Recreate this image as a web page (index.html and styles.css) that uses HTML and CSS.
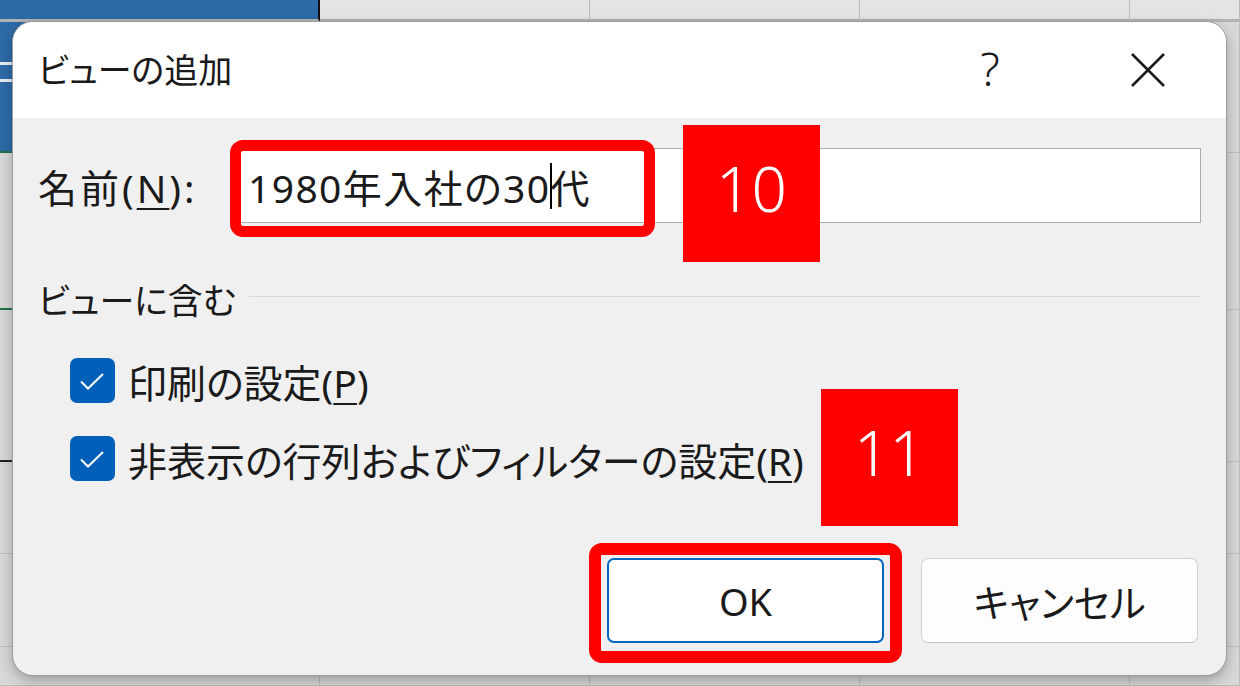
FILE: index.html
```html
<!DOCTYPE html>
<html lang="ja">
<head>
    <meta charset="UTF-8">
    <meta name="viewport" content="width=device-width, initial-scale=1.0">
    <title>ビューの追加</title>
    <link rel="stylesheet" href="styles.css">
</head>
<body>
    <!-- Excel sheet behind the dialog -->
    <div class="sheet">
        <div class="cell hd sel"></div><div class="cell hd"></div><div class="cell hd"></div><div class="cell hd"></div><div class="cell hd"></div>
        <div class="cell sel green"><div class="grip"></div></div><div class="cell"></div><div class="cell"></div><div class="cell"></div><div class="cell"></div>
        <div class="cell green"></div><div class="cell"></div><div class="cell"></div><div class="cell"></div><div class="cell"></div>
        <div class="cell dark"></div><div class="cell"></div><div class="cell"></div><div class="cell"></div><div class="cell"></div>
        <div class="cell"></div><div class="cell"></div><div class="cell"></div><div class="cell"></div><div class="cell"></div>
        <div class="cell"></div><div class="cell"></div><div class="cell"></div><div class="cell"></div><div class="cell"></div>
        <div class="cell"></div><div class="cell"></div><div class="cell"></div><div class="cell"></div><div class="cell"></div>
    </div>

    <!-- Dialog -->
    <div class="dialog">
        <div class="titlebar">
            <span class="title">ビューの追加</span>
            <button class="tb-btn help">?</button>
            <button class="tb-btn close">
                <svg width="36" height="36" viewBox="0 0 36 36">
                    <path d="M2 2 L34 34 M34 2 L2 34" stroke="#1c1c1c" stroke-width="2.6" fill="none"/>
                </svg>
            </button>
        </div>

        <div class="content">
            <div class="name-row">
                <label class="name-label">名前(<u>N</u>):</label>
                <div class="text-input">1980年入社の30<span class="caret"></span>代</div>
            </div>

            <div class="group-head">ビューに含む</div>

            <div class="checks">
                <div class="check-row">
                    <span class="checkbox">
                        <svg width="45" height="45" viewBox="0 0 45 45"><path d="M11 23.5 L18 30.5 L33 16" stroke="#ffffff" stroke-width="2" fill="none"/></svg>
                    </span>
                    <span>印刷の設定(<u>P</u>)</span>
                </div>
                <div class="check-row">
                    <span class="checkbox">
                        <svg width="45" height="45" viewBox="0 0 45 45"><path d="M11 23.5 L18 30.5 L33 16" stroke="#ffffff" stroke-width="2" fill="none"/></svg>
                    </span>
                    <span>非表示の行列およびフィルターの設定(<u>R</u>)</span>
                </div>
            </div>

            <div class="buttons">
                <button class="btn btn-default">OK</button>
                <button class="btn">キャンセル</button>
            </div>
        </div>
    </div>

    <!-- Red annotations -->
    <div class="mark mark-input"></div>
    <div class="mark mark-ok"></div>
    <div class="step step-10">10</div>
    <div class="step step-11">11</div>
</body>
</html>
```

FILE: styles.css
```css
/* General */
body {
    margin: 0;
    width: 1240px;
    height: 686px;
    overflow: hidden;
    position: relative;
    font-family: "Noto Sans", "Noto Sans CJK JP", sans-serif;
    font-feature-settings: "palt";
    color: #1a1a1a;
    background-color: #d6d6d6;
}

button {
    font-family: inherit;
    font-feature-settings: "palt";
    color: inherit;
    cursor: pointer;
}

u {
    text-decoration-thickness: 2px;
    text-underline-offset: 5px;
}

/* Sheet behind */
.sheet {
    display: grid;
    grid-template-columns: 320px 270px 270px 270px 1fr;
    grid-template-rows: 22px 131px 157px 152px 92px 93px 1fr;
    height: 686px;
}

.cell {
    background-color: #d8d8d8;
    border-right: 1px solid #bdbdbd;
    border-bottom: 1px solid #bdbdbd;
}

.cell.hd {
    background-color: #e4e4e4;
    border-bottom: 3px solid #b2b2b2;
}

.cell.sel {
    background-color: #2d6ba7;
    border-right: 2px solid #111;
}

.cell.green {
    border-bottom: 2px solid #217346;
}

.cell.dark {
    border-bottom: 2px solid #222;
}

.grip {
    width: 14px;
    height: 14px;
    margin-top: 40px;
    border-top: 3px solid #e8eef5;
    border-bottom: 3px solid #e8eef5;
}

/* Dialog */
.dialog {
    position: absolute;
    left: 13px;
    top: 22px;
    width: 1213px;
    height: 653px;
    border-radius: 20px;
    overflow: hidden;
    background-color: #f0f0f0;
    box-shadow: 0 0 0 1px #9c9c9c, 0 5px 14px rgba(0, 0, 0, 0.3);
    display: flex;
    flex-direction: column;
}

.titlebar {
    height: 96px;
    flex: none;
    background-color: #fff;
    display: flex;
    align-items: center;
}

.title {
    flex: 1;
    padding-left: 25px;
    padding-bottom: 4px;
    font-size: 34px;
}

.tb-btn {
    width: 160px;
    height: 96px;
    border: none;
    background: none;
    padding: 0;
    display: flex;
    align-items: center;
    justify-content: center;
}

.help {
    font-size: 46px;
    font-weight: 300;
    padding-bottom: 4px;
}

.close {
    width: 156px;
}

.content {
    flex: 1;
    padding: 30px 25px 32px 25px;
    display: flex;
    flex-direction: column;
    font-size: 39px;
}

/* Name row */
.name-row {
    display: flex;
    height: 75px;
}

.name-label {
    width: 199px;
    flex: none;
    align-self: center;
    letter-spacing: 3px;
}

.text-input {
    flex: 1;
    background-color: #fff;
    border: 1px solid #aeaeae;
    padding-left: 10px;
    display: flex;
    align-items: center;
    letter-spacing: 1.4px;
}

.caret {
    display: inline-block;
    width: 0;
    height: 46px;
    border-left: 2px solid #000;
    margin-right: -2px;
}

/* Group */
.group-head {
    margin-top: 55px;
    height: 40px;
    display: flex;
    align-items: center;
    gap: 13px;
    font-size: 35px;
}

.group-head::after {
    content: "";
    flex: 1;
    height: 1px;
    margin-top: -4px;
    background-color: #d6d6d6;
}

.checks {
    margin-top: 40px;
    padding-left: 32px;
}

.check-row {
    height: 45px;
    display: flex;
    align-items: center;
    gap: 13px;
}

.check-row + .check-row {
    margin-top: 33px;
}

.checkbox {
    width: 45px;
    height: 45px;
    border-radius: 7px;
    background-color: #005fb8;
    display: flex;
}

/* Buttons */
.buttons {
    margin-top: auto;
    display: flex;
    justify-content: flex-end;
    gap: 37px;
    padding-right: 3px;
}

.btn {
    width: 277px;
    height: 85px;
    border-radius: 7px;
    font-size: 38px;
    background-color: #fdfdfd;
    border: 1px solid #d2d2d2;
    border-bottom-color: #c2c2c2;
}

.btn-default {
    background-color: #fff;
    border: 2px solid #0067c0;
}

/* Annotations */
.mark {
    position: absolute;
    box-sizing: border-box;
    border: 11px solid #ff0000;
    border-radius: 13px;
}

.mark-input {
    left: 230px;
    top: 140px;
    width: 425px;
    height: 97px;
}

.mark-ok {
    left: 589px;
    top: 543px;
    width: 313px;
    height: 120px;
    border-width: 12px;
}

.step {
    position: absolute;
    width: 137px;
    height: 137px;
    padding-bottom: 12px;
    box-sizing: border-box;
    background-color: #ff0000;
    color: #fff;
    display: flex;
    align-items: center;
    justify-content: center;
    font-weight: 300;
    font-size: 62px;
}

.step-10 {
    left: 683px;
    top: 125px;
}

.step-11 {
    left: 821px;
    top: 389px;
}
```
